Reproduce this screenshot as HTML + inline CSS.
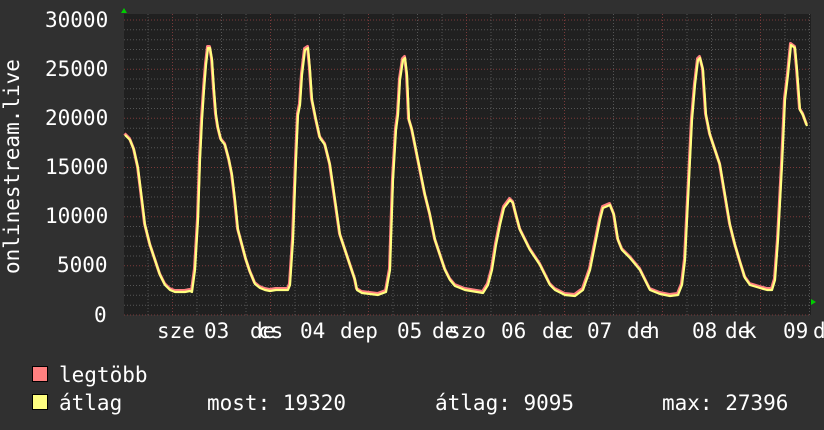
<!DOCTYPE html>
<html><head><meta charset="utf-8"><style>
html,body{margin:0;padding:0;background:#303030;}
body{width:824px;height:430px;overflow:hidden;position:relative;font-family:"DejaVu Sans Mono","Liberation Mono",monospace;color:#fff;}
.t{position:absolute;font-size:21px;line-height:1;white-space:pre;}
</style></head><body>
<svg width="824" height="430" style="position:absolute;left:0;top:0">
<rect x="124" y="14" width="687" height="301" fill="#202020"/>
<g id="grid"></g>
<polygon points="124,8 121,13 127,13" fill="#0c0"/>
<polygon points="816,302 811,299 811,305" fill="#0c0"/>
<polyline id="red" fill="none" stroke="#ff8080" stroke-width="3" stroke-linejoin="round" transform="translate(-0.5,-1.5)"/>
<polyline id="yel" fill="none" stroke="#ffff80" stroke-width="2.2" stroke-linejoin="round"/>
<rect x="32.5" y="366.5" width="15" height="15" fill="#ff8080" stroke="#000"/>
<rect x="32.5" y="394.5" width="15" height="15" fill="#ffff80" stroke="#000"/>
<text x="0" y="0" transform="translate(19,274) rotate(-90)" font-family="DejaVu Sans Mono, monospace" font-size="21" fill="#fff">onlinestream.live</text>
</svg>
<div class="t" style="left:45px;top:10px">30000</div>
<div class="t" style="left:45px;top:59px">25000</div>
<div class="t" style="left:45px;top:108px">20000</div>
<div class="t" style="left:45px;top:157px">15000</div>
<div class="t" style="left:45px;top:206px">10000</div>
<div class="t" style="left:57px;top:255px">5000</div>
<div class="t" style="left:94px;top:305px">0</div>
<div class="t" style="left:157px;top:321px">sze</div>
<div class="t" style="left:204px;top:321px">03</div>
<div class="t" style="left:250px;top:321px">de</div><div class="t" style="left:258px;top:321px">cs</div>
<div class="t" style="left:300px;top:321px">04</div>
<div class="t" style="left:340px;top:321px">dep</div>
<div class="t" style="left:397px;top:321px">05</div>
<div class="t" style="left:432px;top:321px">de</div><div class="t" style="left:448px;top:321px">szo</div>
<div class="t" style="left:501px;top:321px">06</div>
<div class="t" style="left:542px;top:321px">de</div><div class="t" style="left:561px;top:321px">c</div>
<div class="t" style="left:587px;top:321px">07</div>
<div class="t" style="left:627px;top:321px">de</div><div class="t" style="left:647px;top:321px">h</div>
<div class="t" style="left:692px;top:321px">08</div>
<div class="t" style="left:725px;top:321px">de</div><div class="t" style="left:744px;top:321px">k</div>
<div class="t" style="left:783px;top:321px">09</div>
<div class="t" style="left:813px;top:321px">d</div>
<div class="t" style="left:59px;top:365px">legtöbb</div>
<div class="t" style="left:59px;top:393px">átlag</div>
<div class="t" style="left:207px;top:393px">most: 19320</div>
<div class="t" style="left:435px;top:393px">átlag: 9095</div>
<div class="t" style="left:662px;top:393px">max: 27396</div>
<script>
var g=document.getElementById('grid'),s='';
for(var i=0;i<=30;i++){var y=(315-i*9.833).toFixed(1);var maj=i%5==0;
s+='<line x1="124" x2="811" y1="'+y+'" y2="'+y+'" stroke="'+(maj?'#7a3a3a':'#555')+'" stroke-dasharray="1,2"/>';}
for(var x=148;x<811;x+=24.5){var k=Math.round((x-172)/24.5);var maj=((k%4)+4)%4==0;
s+='<line y1="14" y2="315" x1="'+x+'" x2="'+x+'" stroke="'+(maj?'#7a3a3a':'#555')+'" stroke-dasharray="1,2"/>';}
g.innerHTML=s;
var p="125,135 130,140 134,150 138,168 142,200 145,225 150,245 155,260 160,275 165,285 170,290 175,292 185,292 190,291 192,292 195,270 198,220 200,160 202,120 204,90 206,65 208,48 210,48 212,60 214,90 216,115 218,128 221,140 225,145 229,160 232,175 235,200 238,230 242,245 246,260 250,272 255,284 260,288 265,290 270,291 276,290 288,290 290,285 293,240 296,160 298,115 300,105 302,75 305,50 308,48 310,70 312,100 316,120 320,138 325,145 330,165 335,200 340,235 345,250 350,265 355,280 357,290 362,293 370,294 378,295 386,292 390,270 393,180 396,130 398,115 400,80 403,60 405,58 407,75 409,120 412,130 416,150 420,170 425,195 430,215 435,240 440,255 445,270 450,280 455,286 465,290 483,293 488,285 492,270 496,245 500,225 504,208 510,200 513,203 516,215 520,230 525,240 530,250 540,265 545,275 550,285 555,290 565,295 575,296 583,290 590,270 596,240 600,220 603,208 610,205 614,215 618,240 622,250 630,258 640,270 645,280 650,290 660,294 670,296 678,295 682,285 685,260 688,200 690,160 692,120 695,85 698,60 700,58 703,70 706,115 708,125 710,135 715,150 720,165 725,195 730,225 735,245 740,262 745,278 750,285 760,288 767,290 772,290 775,280 778,240 782,165 785,100 788,75 791,45 795,48 797,70 800,110 803,115 807,126";
document.getElementById('red').setAttribute('points',p);
document.getElementById('yel').setAttribute('points',p);
</script>
</body></html>
